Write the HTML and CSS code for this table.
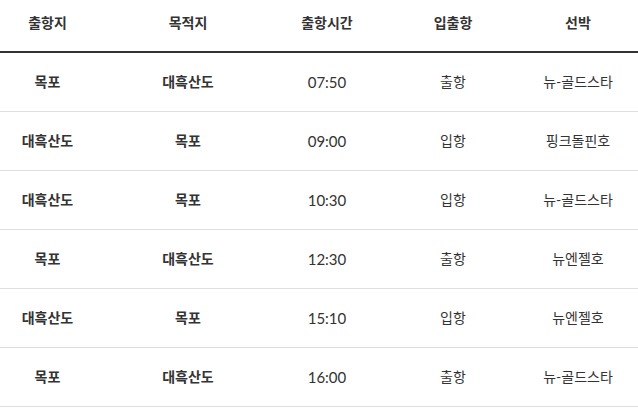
FILE: index.html
```html
<!DOCTYPE html>
<html lang="ko">
<head>
<meta charset="utf-8">
<title>운항시간표</title>
<link rel="stylesheet" href="styles.css">
</head>
<body>
<table class="schedule">
  <colgroup>
    <col class="c-from">
    <col class="c-to">
    <col class="c-time">
    <col class="c-dir">
    <col class="c-ship">
  </colgroup>
  <thead>
    <tr>
      <th>출항지</th>
      <th>목적지</th>
      <th>출항시간</th>
      <th>입출항</th>
      <th class="last">선박</th>
    </tr>
  </thead>
  <tbody>
    <tr><td class="strong">목포</td><td class="strong">대흑산도</td><td class="num">07:50</td><td>출항</td><td class="last">뉴-골드스타</td></tr>
    <tr><td class="strong">대흑산도</td><td class="strong">목포</td><td class="num">09:00</td><td>입항</td><td class="last">핑크돌핀호</td></tr>
    <tr><td class="strong">대흑산도</td><td class="strong">목포</td><td class="num">10:30</td><td>입항</td><td class="last">뉴-골드스타</td></tr>
    <tr><td class="strong">목포</td><td class="strong">대흑산도</td><td class="num">12:30</td><td>출항</td><td class="last">뉴엔젤호</td></tr>
    <tr><td class="strong">대흑산도</td><td class="strong">목포</td><td class="num">15:10</td><td>입항</td><td class="last">뉴엔젤호</td></tr>
    <tr><td class="strong">목포</td><td class="strong">대흑산도</td><td class="num">16:00</td><td>출항</td><td class="last">뉴-골드스타</td></tr>
  </tbody>
</table>
</body>
</html>
```

FILE: styles.css
```css
html, body {
  margin: 0;
  padding: 0;
  background: #ffffff;
}

body {
  font-family: Lato, "Noto Sans CJK KR", sans-serif;
  font-size: 14px;
  color: #333333;
}

.schedule {
  width: 638px;
  border-collapse: collapse;
  table-layout: fixed;
}

.c-from { width: 95px; }
.c-to { width: 186px; }
.c-time { width: 92px; }
.c-dir { width: 160px; }
.c-ship { width: 105px; }

.schedule th {
  height: 51px;
  box-sizing: border-box;
  padding: 13px 0 18px;
  line-height: 20px;
  font-weight: 700;
  text-align: center;
  border-bottom: 2px solid #333333;
  color: #333333;
}

.schedule td {
  height: 59px;
  box-sizing: border-box;
  padding: 0;
  line-height: 20px;
  text-align: center;
  vertical-align: middle;
  border-bottom: 1px solid #dedede;
}

.schedule td.strong {
  font-weight: 700;
}

.schedule td.num {
  font-size: 15px;
}

.schedule .last {
  padding-right: 15px;
}
```
